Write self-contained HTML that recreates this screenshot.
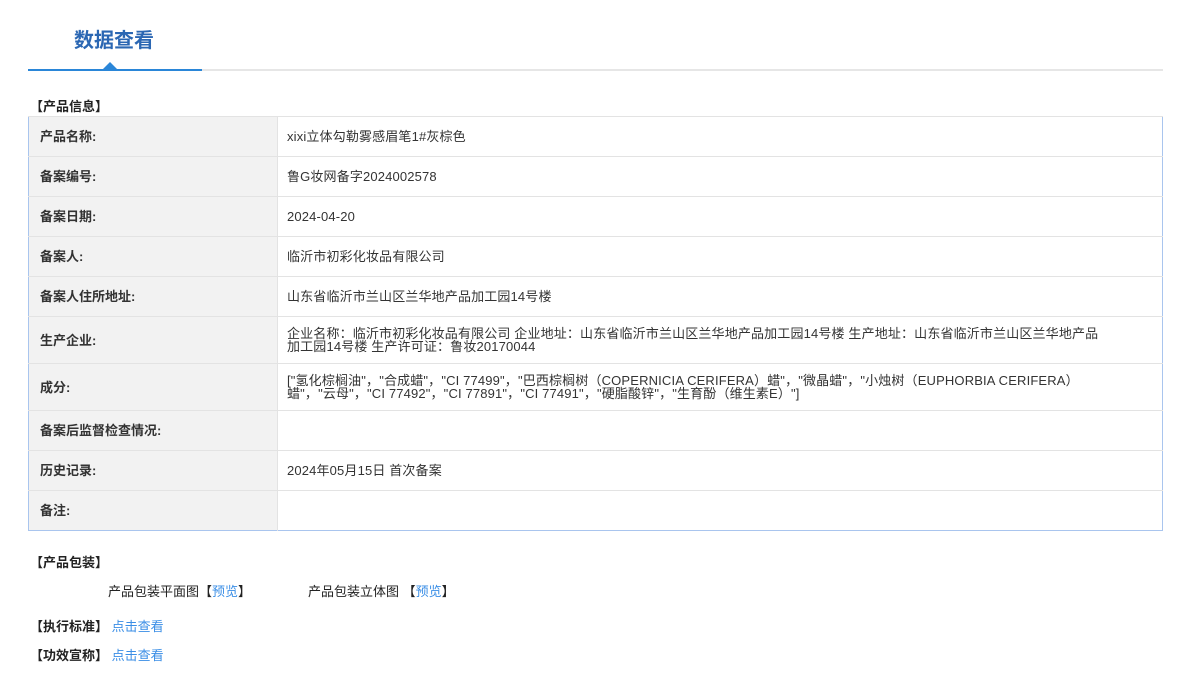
<!DOCTYPE html>
<html><head><meta charset="utf-8"><style>
body{margin:0;background:#fff;font-family:"Liberation Sans","Noto Sans CJK SC",sans-serif;font-size:13px;color:#333;}
.t{position:absolute;left:74px;top:27px;font-size:20px;font-weight:bold;color:#2b67b3;line-height:28px;}
.gl{position:absolute;left:28px;top:69px;width:1135px;height:2px;background:#e6e6e6;}
.bl{position:absolute;left:28px;top:69px;width:174px;height:2px;background:#2a86d8;}
.tri{position:absolute;left:103px;top:62px;width:0;height:0;border-left:7px solid transparent;border-right:7px solid transparent;border-bottom:7px solid #2a86d8;}
.s{position:absolute;left:30px;font-weight:bold;color:#222;}
table{position:absolute;left:28px;top:116px;width:1135px;border-collapse:collapse;border:1px solid #a9c5ee;}
td{border-top:1px solid #e3e3e3;padding:0 9px;line-height:13px;color:#333;letter-spacing:0.15px;}
td.l{width:227px;background:#f2f2f2;font-weight:bold;padding-left:11px;padding-right:10px;color:#333;border-right:1px solid #e3e3e3;letter-spacing:0;}
a{color:#3a8ee6;text-decoration:none;}
.p{position:absolute;color:#222;}
</style></head><body>
<div class="t">数据查看</div>
<div class="gl"></div><div class="bl"></div><div class="tri"></div>
<div class="s" style="top:96px">【产品信息】</div>
<table>
<tr style="height:40px"><td class="l">产品名称:</td><td>xixi立体勾勒雾感眉笔1#灰棕色</td></tr>
<tr style="height:40px"><td class="l">备案编号:</td><td>鲁G妆网备字2024002578</td></tr>
<tr style="height:40px"><td class="l">备案日期:</td><td>2024-04-20</td></tr>
<tr style="height:40px"><td class="l">备案人:</td><td>临沂市初彩化妆品有限公司</td></tr>
<tr style="height:40px"><td class="l">备案人住所地址:</td><td>山东省临沂市兰山区兰华地产品加工园14号楼</td></tr>
<tr style="height:47px"><td class="l">生产企业:</td><td style="padding-right:55px">企业名称：临沂市初彩化妆品有限公司 企业地址：山东省临沂市兰山区兰华地产品加工园14号楼 生产地址：山东省临沂市兰山区兰华地产品加工园14号楼 生产许可证：鲁妆20170044</td></tr>
<tr style="height:47px"><td class="l">成分:</td><td style="padding-right:70px">["氢化棕榈油"，"合成蜡"，"CI 77499"，"巴西棕榈树（COPERNICIA CERIFERA）蜡"，"微晶蜡"，"小烛树（EUPHORBIA CERIFERA）蜡"，"云母"，"CI 77492"，"CI 77891"，"CI 77491"，"硬脂酸锌"，"生育酚（维生素E）"]</td></tr>
<tr style="height:40px"><td class="l">备案后监督检查情况:</td><td></td></tr>
<tr style="height:40px"><td class="l">历史记录:</td><td>2024年05月15日 首次备案</td></tr>
<tr style="height:40px"><td class="l">备注:</td><td></td></tr>
</table>
<div class="s" style="top:552px">【产品包装】</div>
<div class="p" style="left:108px;top:581px">产品包装平面图【<a>预览</a>】</div>
<div class="p" style="left:308px;top:581px">产品包装立体图 【<a>预览</a>】</div>
<div class="s" style="top:616px">【执行标准】 <a style="font-weight:normal">点击查看</a></div>
<div class="s" style="top:645px">【功效宣称】 <a style="font-weight:normal">点击查看</a></div>
</body></html>
